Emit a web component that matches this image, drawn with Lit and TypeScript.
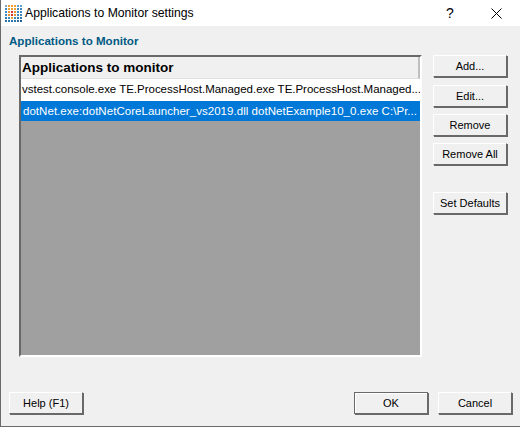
import { LitElement, html, css, svg } from "lit";
import { customElement } from "lit/decorators.js";

const ICON = [
  ["#7fa8c8", "#f0a030", "#f0a030", "#f0a030", "#5f9fd0", "#5f9fd0"],
  ["#3f88c0", "#f0a030", "#e8a030", "#f0a030", "#3f88c0", "#3f88c0"],
  ["#3f88c0", "#e89030", "#d83020", "#e89030", "#3f88c0", "#3f88c0"],
  ["#3f88c0", "#e89030", "#d83020", "#e89030", "#3f88c0", "#3f88c0"],
  ["#2f78b0", "#3f88c0", "#e8a030", "#3f88c0", "#2f78b0", "#2f78b0"],
  ["#2f6fa0", "#2f78b0", "#2f78b0", "#2f78b0", "#2f6fa0", "#1f5f90"],
];

@customElement("app-root")
export class AppRoot extends LitElement {
  static styles = css`
    :host { display: block; width: 520px; height: 427px; }
    * { box-sizing: border-box; }
    .win {
      width: 520px; height: 427px; background: #f0f0f0;
      border: 1px solid #6a6a6a; border-top: 0; border-right: 0;
      display: flex; flex-direction: column;
      font-family: "Liberation Sans", Arial, sans-serif; font-size: 11.5px; color: #000;
    }
    .title {
      height: 26px; background: #fff; display: flex; align-items: center;
      padding-left: 3px; font-size: 12.2px; flex: none;
    }
    .title svg.logo { width: 18px; height: 18px; margin-right: 3px; }
    .title .name { flex: 1; }
    .help { width: 46px; text-align: center; font-size: 14px; }
    .close { width: 46px; height: 26px; display: flex; align-items: center; justify-content: center; margin-right: 1px; }
    .heading {
      font-weight: 700; font-size: 11.6px; color: #005a84; height: 14px; line-height: 14px;
      margin: 8px 0 0 8px; flex: none;
    }
    .main { display: flex; margin: 7px 0 0 18px; height: 302px; flex: none; }
    .list {
      width: 403px; height: 302px; background: #a0a0a0; flex: none;
      border: 2px solid; border-color: #696969 #fff #fff #696969;
      display: flex; flex-direction: column;
    }
    .hdr {
      height: 22px; background: #f0f0f0; font-weight: 700; font-size: 13.5px; line-height: 21px;
      padding-left: 1px; border-right: 2px solid #bfbfbf; border-bottom: 1px solid #e0e0e0; flex: none;
    }
    .row {
      height: 21px; line-height: 20px; padding-left: 1px; background: #fff; flex: none;
      white-space: nowrap; overflow: hidden; letter-spacing: -0.02px;
    }
    .row.sel {
      background: #0078d7; color: #fff; border-top: 1px solid #fff;
      padding-left: 2px; letter-spacing: 0.04px;
    }
    .side { display: flex; flex-direction: column; margin-left: 11px; }
    .btn {
      height: 22px; width: 74px; background: #f0f0f0; text-align: center; line-height: 20px;
      border: 1px solid; border-color: #fff #696969 #696969 #fff;
      box-shadow: 1px 1px 0 #696969;
      font: inherit; font-size: 11px; padding: 0; color: #000; white-space: nowrap;
    }
    .side .btn.edit { margin-top: 8px; }
    .side .btn.next { margin-top: 7px; }
    .side .btn.gap { margin-top: 27px; }
    .foot { display: flex; margin: 35px 0 0 8px; }
    .foot .spacer { flex: 1; }
    .foot .btn.ok { border-color: #696969; box-shadow: 1px 1px 0 #696969, inset 1px 1px 0 #fff; }
    .foot .btn.last { margin-left: 10px; margin-right: 8px; }
  `;

  render() {
    return html`<div class="win">
      <div class="title">
        <svg class="logo" viewBox="0 0 18 18">
          ${ICON.map((r, y) => r.map((c, x) => svg`<rect x=${1 + x * 3} y=${1 + y * 3} width="2" height="2" fill=${c}></rect>`))}
        </svg>
        <span class="name">Applications to Monitor settings</span>
        <span class="help">?</span>
        <span class="close"><svg width="11" height="11" viewBox="0 0 11 11"><path d="M.5.5l10 10M10.5.5l-10 10" stroke="#000" fill="none"></path></svg></span>
      </div>
      <div class="heading">Applications to Monitor</div>
      <div class="main">
        <div class="list">
          <div class="hdr">Applications to monitor</div>
          <div class="row">vstest.console.exe TE.ProcessHost.Managed.exe TE.ProcessHost.Managed...</div>
          <div class="row sel">dotNet.exe:dotNetCoreLauncher_vs2019.dll dotNetExample10_0.exe C:\\Pr...</div>
        </div>
        <div class="side">
          <button class="btn">Add...</button>
          <button class="btn edit">Edit...</button>
          <button class="btn next">Remove</button>
          <button class="btn next">Remove All</button>
          <button class="btn gap">Set Defaults</button>
        </div>
      </div>
      <div class="foot">
        <button class="btn">Help (F1)</button>
        <span class="spacer"></span>
        <button class="btn ok">OK</button>
        <button class="btn last">Cancel</button>
      </div>
    </div>`;
  }
}
